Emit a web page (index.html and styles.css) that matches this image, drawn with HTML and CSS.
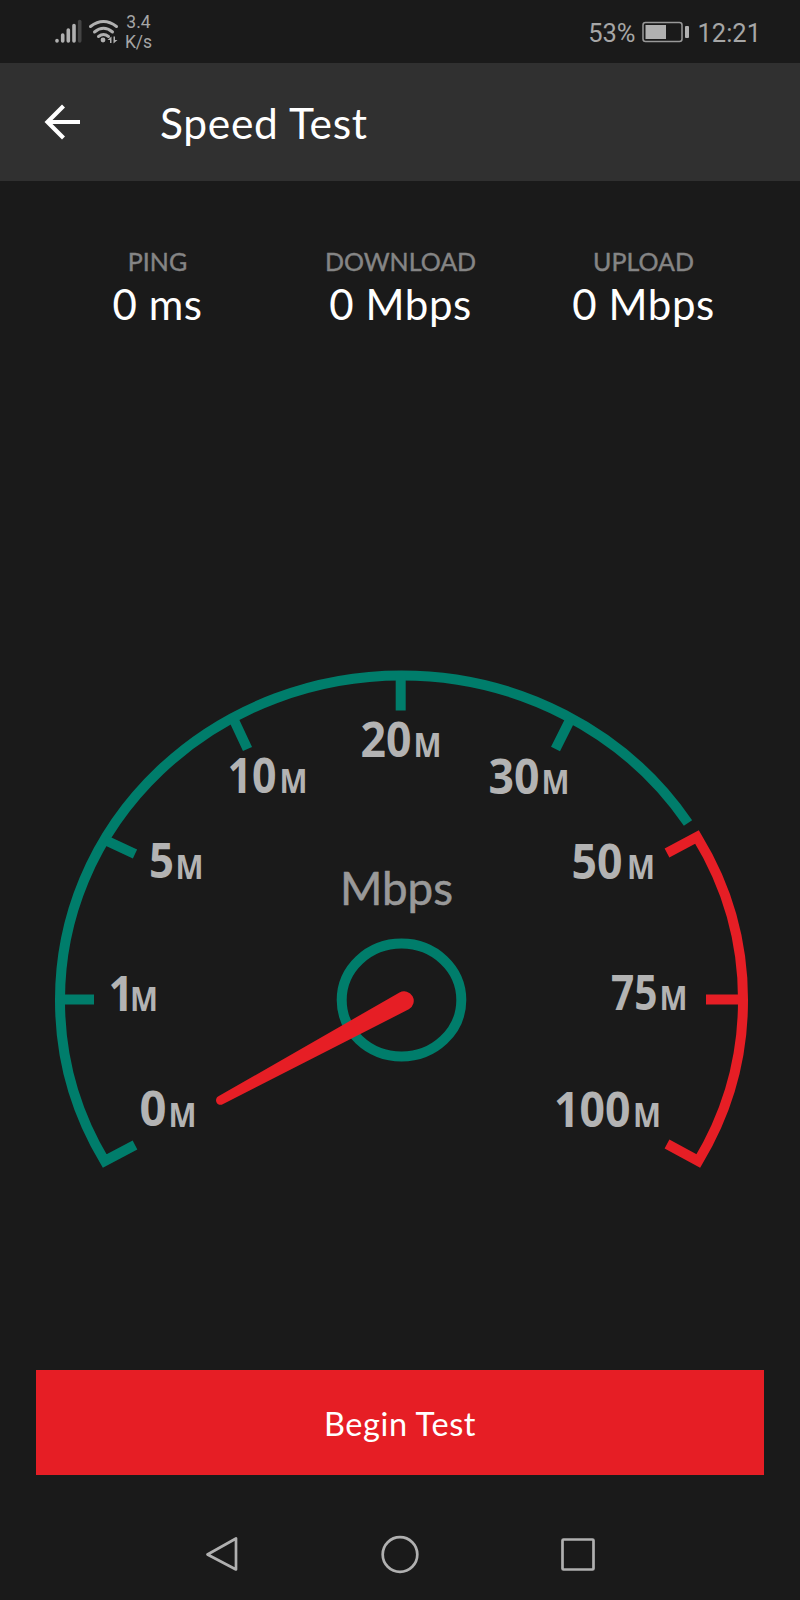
FILE: index.html
```
<!DOCTYPE html>
<html lang="en">
<head>
	<meta charset="UTF-8">
	<meta name="viewport" content="width=device-width, initial-scale=1.0">
	<title>Speed Test</title>
	<link rel="stylesheet" href="styles.css">
</head>
<body>

	<div class="statusBar">
		<svg class="statusIcons" width="70" height="64" viewBox="50 0 70 64">
			<!-- signal -->
			<g class="bars">
				<path d="M57 40.500v.5M62.700 35v6M68.300 30v11M74 25.500v15.500"/>
				<path class="dim" d="M79.700 21.500v19.500"/>
			</g>
			<!-- wifi -->
			<g class="wifi">
				<path d="M90.500 26.500q13-10 26 0M94.500 32q9-7.500 18 0M98.500 36.500q5-4 10 0"/>
			</g>
			<circle class="fill" cx="103" cy="40" r="2.400"/>
			<path class="fill" d="M107.500 40l4-3.500v6.500h-1.500v-3zM117.500 40l-4 3.500v-7h1.500v3.500z"/>
		</svg>
		<div class="rate"><span>3.4</span><span>K/s</span></div>
		<span class="percent">53%</span>
		<svg class="battery" width="42" height="22" viewBox="0 0 42 22">
			<rect class="shell" x="1" y="1.500" width="39" height="19" rx="2.500"/>
			<rect class="fill" x="3.500" y="4" width="20.500" height="14"/>
		</svg>
		<svg class="batteryTip" width="4" height="12" viewBox="0 0 4 12"><rect class="fill" width="4" height="12" rx="1"/></svg>
		<span class="clock">12:21</span>
	</div>

	<header class="topBar">
		<svg class="back" width="38" height="38" viewBox="0 0 38 38">
			<path d="M20.500 3L4.500 19l16 16M4.500 19h32.500"/>
		</svg>
		<h1>Speed Test</h1>
	</header>

	<main>
		<div class="results">
			<div class="result">
				<span class="label">PING</span>
				<span class="value">0 ms</span>
			</div>
			<div class="result">
				<span class="label">DOWNLOAD</span>
				<span class="value">0 Mbps</span>
			</div>
			<div class="result">
				<span class="label">UPLOAD</span>
				<span class="value">0 Mbps</span>
			</div>
		</div>

		<svg class="gauge" width="800" height="530" viewBox="0 650 800 530">
			<g class="green">
				<path d="M135 1145L104.700 1161A341.500 324 0 0 1 60 999.500A341.500 324 0 0 1 401.500 675.500A341.500 324 0 0 1 688 823"/>
				<path d="M60 999.500H94M105 840L135 854M233 718L247.500 749M400.700 676V710.500M571 718L555.500 749"/>
				<ellipse cx="401.500" cy="1000" rx="59.800" ry="56.500"/>
			</g>
			<g class="red">
				<path d="M667 853L697 837A341.500 324 0 0 1 743 999.500A341.500 324 0 0 1 698.300 1161L667 1144"/>
				<path d="M743 999.500H706"/>
			</g>
			<path class="needle" d="M218.400 1096.300L399.500 992.500A9.500 9.500 0 0 1 408.800 1009.300L222.700 1104.300A4.500 4.500 0 0 1 218.400 1096.300Z"/>

			<g class="digits">
				<text x="139.500" y="1126" textLength="27" lengthAdjust="spacingAndGlyphs">0</text>
				<text x="108.500" y="1011" textLength="25" lengthAdjust="spacingAndGlyphs">1</text>
				<text x="149" y="878" textLength="25" lengthAdjust="spacingAndGlyphs">5</text>
				<text x="227.500" y="793" textLength="49" lengthAdjust="spacingAndGlyphs">10</text>
				<text x="360.500" y="756.500" textLength="51" lengthAdjust="spacingAndGlyphs">20</text>
				<text x="488.500" y="794" textLength="51" lengthAdjust="spacingAndGlyphs">30</text>
				<text x="571.500" y="879" textLength="51" lengthAdjust="spacingAndGlyphs">50</text>
				<text x="611" y="1010" textLength="46.500" lengthAdjust="spacingAndGlyphs">75</text>
				<text x="554" y="1127" textLength="76.500" lengthAdjust="spacingAndGlyphs">100</text>
			</g>
			<g class="units">
				<text x="168.500" y="1127" textLength="28" lengthAdjust="spacingAndGlyphs">M</text>
				<text x="130" y="1011" textLength="28" lengthAdjust="spacingAndGlyphs">M</text>
				<text x="175.500" y="879" textLength="28" lengthAdjust="spacingAndGlyphs">M</text>
				<text x="279.500" y="793" textLength="28" lengthAdjust="spacingAndGlyphs">M</text>
				<text x="413.500" y="756.500" textLength="28" lengthAdjust="spacingAndGlyphs">M</text>
				<text x="541.500" y="794" textLength="28" lengthAdjust="spacingAndGlyphs">M</text>
				<text x="627" y="879" textLength="28" lengthAdjust="spacingAndGlyphs">M</text>
				<text x="659.500" y="1010" textLength="28" lengthAdjust="spacingAndGlyphs">M</text>
				<text x="633" y="1127" textLength="28" lengthAdjust="spacingAndGlyphs">M</text>
			</g>
			<text class="mbps" x="340" y="905" textLength="113" lengthAdjust="spacingAndGlyphs">Mbps</text>
		</svg>

		<button class="begin">Begin Test</button>
	</main>

	<nav class="navBar">
		<svg width="36" height="40" viewBox="0 0 36 40"><path d="M33 4.500v31L4.500 20.500z"/></svg>
		<svg width="40" height="40" viewBox="0 0 40 40"><circle cx="20" cy="20.500" r="17.300"/></svg>
		<svg width="36" height="40" viewBox="0 0 36 40"><rect x="1.500" y="5.500" width="31" height="30" rx="1"/></svg>
	</nav>

</body>
</html>
```
FILE: styles.css
```
*{
	box-sizing: border-box;
}
body{
	margin: 0;
	width: 800px;
	height: 1600px;
	display: flex;
	flex-direction: column;
	background: #1a1a1a;
	color: white;
	font-family: Lato, sans-serif;
	overflow: hidden;
}
svg{
	display: block;
	flex: none;
}
.statusBar{
	height: 63px;
	display: flex;
	align-items: center;
	padding: 0 39px 0 50px;
	color: #a6a6a6;
	font-family: Roboto, sans-serif;
	font-size: 25.5px;
}
.bars path, .wifi path{
	fill: none;
	stroke: #b0b0b0;
	stroke-width: 3.6;
	stroke-linecap: round;
}
.wifi path{
	stroke-width: 3;
}
.bars .dim{
	stroke: #444;
}
.fill{
	fill: #b0b0b0;
}
.rate{
	display: flex;
	flex-direction: column;
	align-items: center;
	width: 37px;
	font-size: 17.5px;
	line-height: 19.5px;
	margin-top: 2px;
}
.percent{
	margin-left: auto;
	margin-top: 2px;
}
.battery{
	margin-left: 7px;
}
.shell{
	fill: none;
	stroke: #999;
	stroke-width: 1.5;
}
.batteryTip{
	margin-left: 1px;
}
.clock{
	margin-left: 8px;
	margin-top: 2px;
}
.topBar{
	height: 118px;
	display: flex;
	align-items: center;
	padding-left: 43px;
	background: #303030;
}
.back path{
	fill: none;
	stroke: white;
	stroke-width: 4.2;
}
h1{
	margin: 0 0 0 79px;
	font-size: 42.5px;
	font-weight: 400;
	letter-spacing: .7px;
}
main{
	flex: 1;
	display: flex;
	flex-direction: column;
}
.results{
	display: grid;
	grid-template-columns: repeat(3, 1fr);
	padding: 65px 35px 0 36px;
	height: 469px;
}
.result{
	display: flex;
	flex-direction: column;
	align-items: center;
}
.label{
	color: #858585;
	font-size: 25px;
	line-height: 30px;
	-webkit-text-stroke: .4px #858585;
}
.value{
	font-size: 42px;
	line-height: 56px;
	letter-spacing: .6px;
}
.green, .red{
	fill: none;
	stroke: #007d6b;
	stroke-width: 10;
}
.red{
	stroke: #e61e25;
}
.needle{
	fill: #e61e25;
}
.digits, .units{
	fill: #b3b3b3;
	font-family: "Open Sans", sans-serif;
	font-weight: 700;
	font-size: 48px;
}
.units{
	font-size: 34px;
}
.mbps{
	fill: #999;
	font-size: 47px;
	stroke: #999;
	stroke-width: .6;
}
.begin{
	margin: 190px 36px 0;
	height: 105px;
	border: none;
	padding-top: 3px;
	background: #e61e25;
	color: white;
	font-family: inherit;
	font-size: 32.5px;
	letter-spacing: .6px;
}
.navBar{
	height: 92px;
	display: flex;
	justify-content: center;
	align-items: center;
	gap: 141px;
}
.navBar path, .navBar circle, .navBar rect{
	fill: none;
	stroke: #b0b0b0;
	stroke-width: 2.7;
	stroke-linejoin: round;
}
```
